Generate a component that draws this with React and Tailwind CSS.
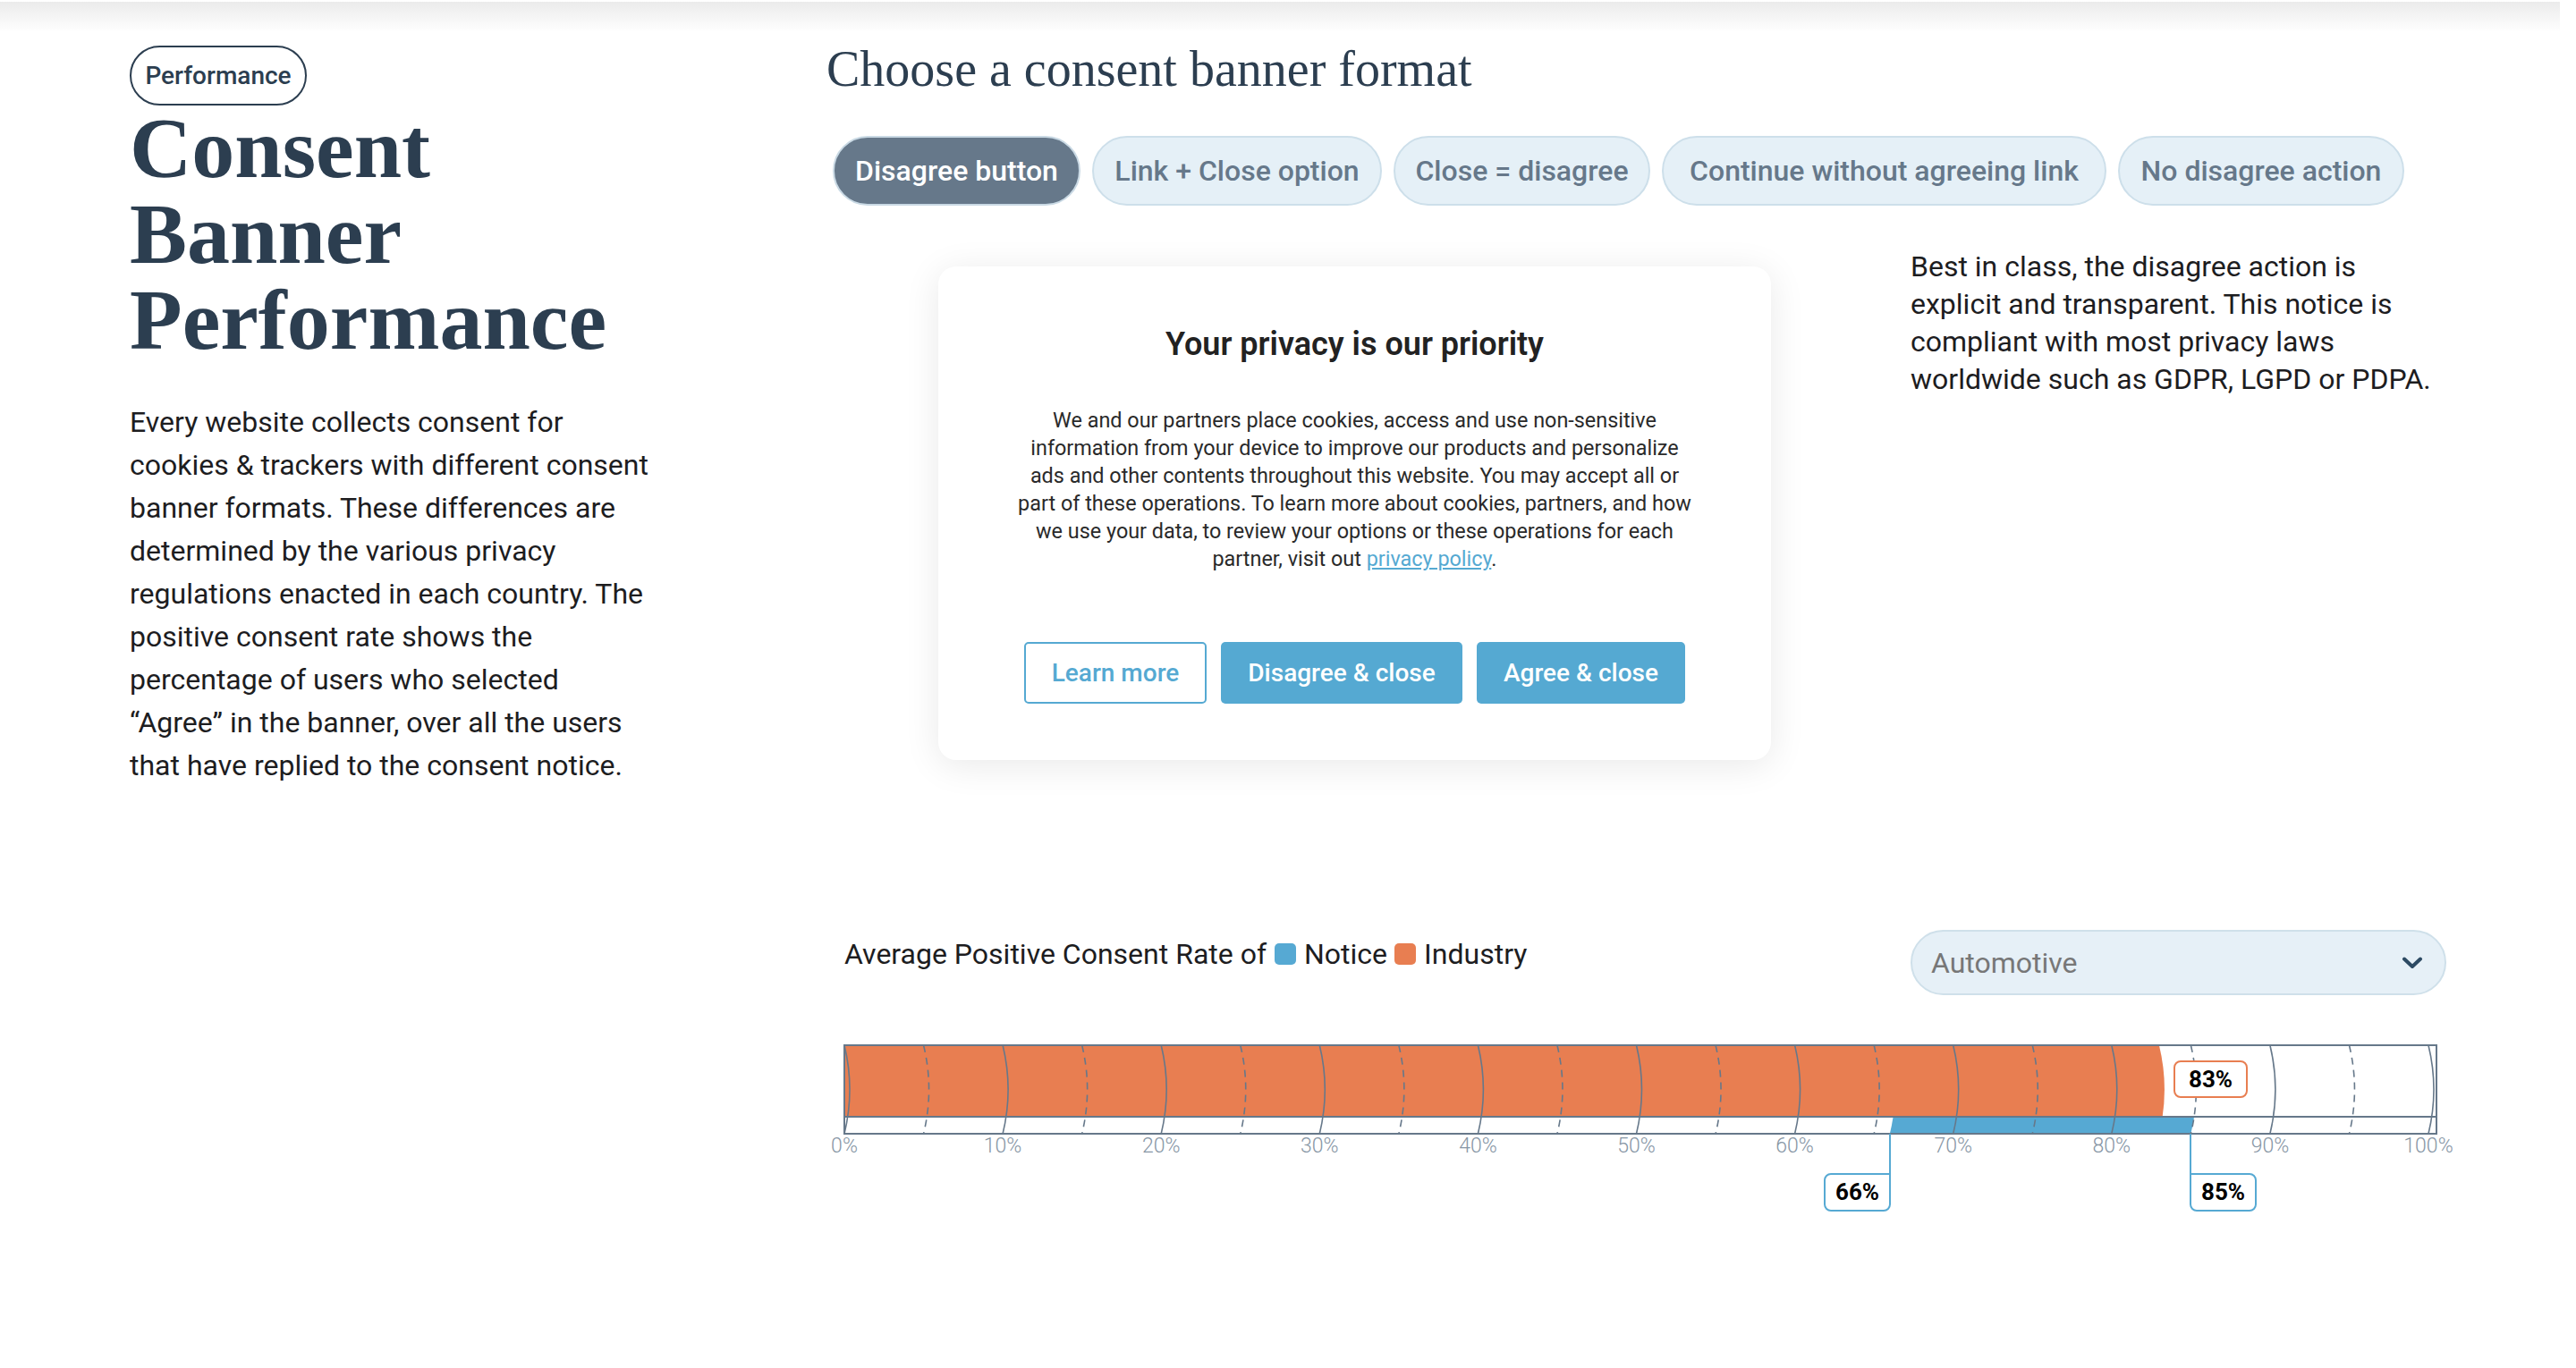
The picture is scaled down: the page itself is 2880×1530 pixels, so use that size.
import React from 'react';

const tabs = [
  { label: 'Disagree button', w: 'w-[277px]', active: true },
  { label: 'Link + Close option', w: 'w-[324px]' },
  { label: 'Close = disagree', w: 'w-[287px]' },
  { label: 'Continue without agreeing link', w: 'w-[497px]' },
  { label: 'No disagree action', w: 'w-[320px]' },
];

// chart x position for a percentage, in svg units
const X = (p) => 1 + p * 17.71;

const Chart = () => {
  const ticks = [];
  for (let i = 0; i <= 20; i++) ticks.push(i * 5);
  const labels = [0, 10, 20, 30, 40, 50, 60, 70, 80, 90, 100];

  return (
    <div className="relative ml-[19px] mt-[55px] h-[101px] w-[1782px]">
      <svg width="1782" height="101" viewBox="0 0 1782 101" className="block">
        <defs>
          <clipPath id="topRow">
            <rect x="0" y="1" width="1782" height="80" />
          </clipPath>
          <clipPath id="bottomRow">
            <rect x="0" y="81" width="1782" height="19" />
          </clipPath>
        </defs>
        <path
          d={`M1 1 H${X(83)} Q${X(83) + 12} 50.5 ${X(83)} 100 H1 Z`}
          fill="#e87e51"
          clipPath="url(#topRow)"
        />
        <path
          d={`M${X(66)} 1 Q${X(66) + 12} 50.5 ${X(66)} 100 H${X(85)} Q${X(85) + 12} 50.5 ${X(85)} 1 Z`}
          fill="#56a9d3"
          clipPath="url(#bottomRow)"
        />
        {ticks.map((p, i) => (
          <path
            key={p}
            d={`M${X(p)} 1 Q${X(p) + 12} 50.5 ${X(p)} 100`}
            fill="none"
            stroke="#66788a"
            strokeWidth="1.6"
            strokeDasharray={i % 2 === 0 ? undefined : '8 6'}
          />
        ))}
        <rect x="1" y="1" width="1780" height="99" fill="none" stroke="#66788a" strokeWidth="2" />
        <line x1="1" y1="81" x2="1781" y2="81" stroke="#66788a" strokeWidth="2" />
      </svg>

      {labels.map((p) => (
        <span
          key={p}
          className="absolute top-[102px] -translate-x-1/2 text-[23px] leading-[23px] font-light text-[#8796a5]"
          style={{ left: X(p) }}
        >
          {p}%
        </span>
      ))}

      {/* industry value */}
      <div className="absolute left-[1487px] top-[18px] flex h-[42px] w-[83px] items-center justify-center rounded-[8px] border-2 border-[#e87e51] bg-white text-[26px] font-bold text-black">
        83%
      </div>

      {/* notice range */}
      <div className="absolute left-[1169px] top-[100px] h-[44px] w-[2px] bg-[#56a9d3]" />
      <div className="absolute left-[1096px] top-[144px] flex h-[43px] w-[75px] items-center justify-center rounded-[8px] rounded-tr-none border-2 border-[#56a9d3] bg-white text-[26px] font-bold text-black">
        66%
      </div>
      <div className="absolute left-[1505px] top-[100px] h-[44px] w-[2px] bg-[#56a9d3]" />
      <div className="absolute left-[1505px] top-[144px] flex h-[43px] w-[75px] items-center justify-center rounded-[8px] rounded-tl-none border-2 border-[#56a9d3] bg-white text-[26px] font-bold text-black">
        85%
      </div>
    </div>
  );
};

export default function App() {
  return (
    <div className="min-h-screen w-full bg-white font-['Roboto',sans-serif] text-[#1d1d1f]">
      <div className="mt-[2px] mr-[18px] h-[34px] bg-linear-to-b from-[#ebebeb] to-white" />

      <div className="flex items-start">
        {/* left intro */}
        <aside className="ml-[145px] w-[600px] shrink-0 pt-[15px]">
          <span className="flex h-[67px] w-[198px] items-center justify-center rounded-full border-2 border-[#2c3e50] text-[28px] font-medium text-[#2c3e50]">
            Performance
          </span>
          <h1 className="font-['Liberation_Serif',serif] text-[96px] leading-[96px] font-bold text-[#2c3e50]">
            Consent
            <br />
            Banner
            <br />
            Performance
          </h1>
          <p className="mt-[42px] text-[32px] leading-[48px]">
            Every website collects consent for
            <br />
            cookies &amp; trackers with different consent
            <br />
            banner formats. These differences are
            <br />
            determined by the various privacy
            <br />
            regulations enacted in each country. The
            <br />
            positive consent rate shows the
            <br />
            percentage of users who selected
            <br />
            “Agree” in the banner, over all the users
            <br />
            that have replied to the consent notice.
          </p>
        </aside>

        {/* right content */}
        <main className="ml-[179px] w-[1811px] shrink-0 pt-[9px]">
          <h2 className="font-['Liberation_Serif',serif] text-[56px] leading-[64px] text-[#2c3e50]">
            Choose a consent banner format
          </h2>

          <div className="ml-[7px] mt-[43px] flex gap-[13px]">
            {tabs.map((t) => (
              <button
                key={t.label}
                className={
                  t.active
                    ? `${t.w} flex h-[78px] items-center justify-center whitespace-nowrap rounded-full border-2 border-[#c9d9e4] bg-[#66788a] text-[32px] font-medium text-white`
                    : `${t.w} flex h-[78px] items-center justify-center whitespace-nowrap rounded-full border-2 border-[#cddfea] bg-[#e5f0f7] text-[32px] font-medium text-[#66788a]`
                }
              >
                {t.label}
              </button>
            ))}
          </div>

          <div className="mt-[47px] flex items-start">
            {/* banner preview */}
            <div className="ml-[125px] mt-[21px] h-[552px] w-[931px] shrink-0 rounded-[20px] bg-white pt-[66px] text-center shadow-[0_6px_40px_rgba(0,0,0,0.09)]">
              <h3 className="text-[36px] leading-[43px] font-semibold text-[#222]">
                Your privacy is our priority
              </h3>
              <p className="mt-[48px] text-[23.4px] leading-[31px] text-[#2a2a2a]">
                We and our partners place cookies, access and use non-sensitive
                <br />
                information from your device to improve our products and personalize
                <br />
                ads and other contents throughout this website. You may accept all or
                <br />
                part of these operations. To learn more about cookies, partners, and how
                <br />
                we use your data, to review your options or these operations for each
                <br />
                partner, visit out{' '}
                <a href="#" className="text-[#55a9d2] underline">
                  privacy policy
                </a>
                .
              </p>
              <div className="mt-[77px] flex justify-center gap-[16px]">
                <button className="h-[69px] w-[204px] rounded-[5px] border-2 border-[#55a9d2] bg-white text-[28px] font-medium text-[#55a9d2]">
                  Learn more
                </button>
                <button className="h-[69px] w-[270px] rounded-[5px] bg-[#55a9d2] text-[28px] font-medium text-white">
                  Disagree &amp; close
                </button>
                <button className="h-[69px] w-[233px] rounded-[5px] bg-[#55a9d2] text-[28px] font-medium text-white">
                  Agree &amp; close
                </button>
              </div>
            </div>

            <p className="ml-[156px] w-[600px] text-[32px] leading-[42px]">
              Best in class, the disagree action is
              <br />
              explicit and transparent. This notice is
              <br />
              compliant with most privacy laws
              <br />
              worldwide such as GDPR, LGPD or PDPA.
            </p>
          </div>

          {/* consent rate chart */}
          <div className="mt-[190px] flex items-start justify-between pl-[20px]">
            <div className="mt-[3px] flex items-center text-[32px] leading-[48px]">
              <span>Average Positive Consent Rate of</span>
              <span className="ml-[9px] h-[24px] w-[24px] rounded-[5px] bg-[#56a9d3]" />
              <span className="ml-[9px]">Notice</span>
              <span className="ml-[8px] h-[24px] w-[24px] rounded-[5px] bg-[#e87e51]" />
              <span className="ml-[9px]">Industry</span>
            </div>
            <div className="flex h-[73px] w-[599px] items-center justify-between rounded-full border-2 border-[#cfe0ea] bg-[#e6f0f7] pl-[21px] pr-[24px] text-[32px] text-[#777]">
              <span>Automotive</span>
              <svg width="24" height="14" viewBox="0 0 24 14" fill="none">
                <path d="M3 2.5 L12 11 L21 2.5" stroke="#2c4a63" strokeWidth="4" strokeLinecap="round" strokeLinejoin="round" />
              </svg>
            </div>
          </div>

          <Chart />
        </main>
      </div>
    </div>
  );
}
